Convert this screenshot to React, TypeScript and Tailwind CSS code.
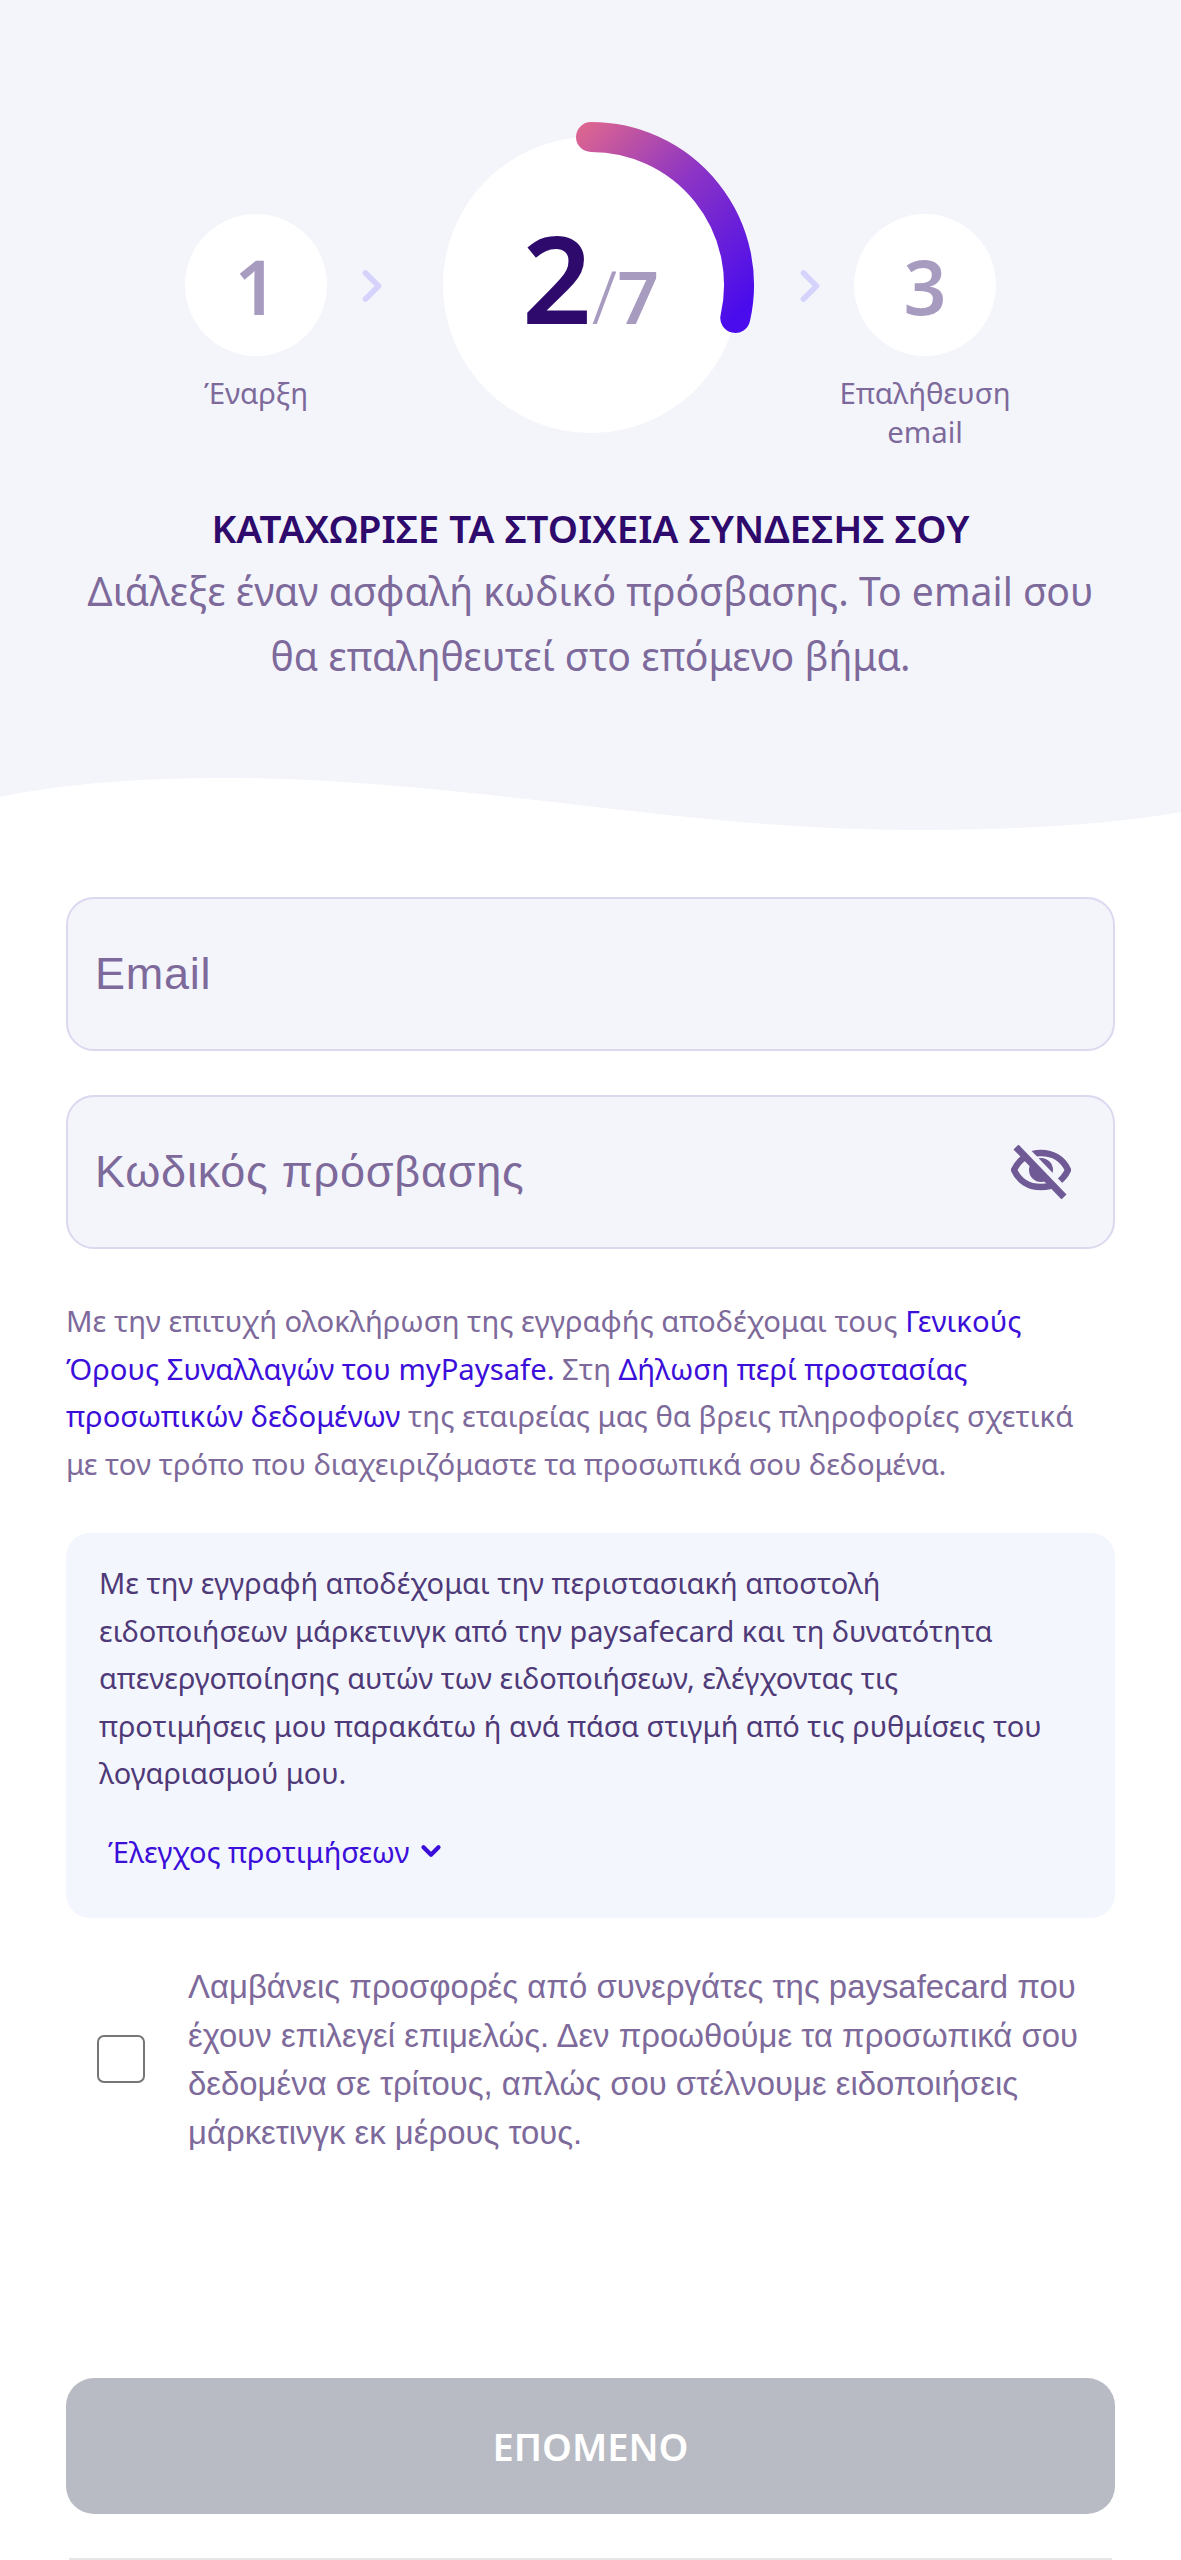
import React from 'react';
import { ChevronDown, ChevronRight } from 'lucide-react';

const StepBubble = ({ num, label }: { num: string; label: React.ReactNode }) => (
  <div className="mt-[77px] flex w-[142px] flex-col items-center">
    <div className="flex h-[142px] w-[142px] items-center justify-center rounded-full bg-white pt-[2px] text-[75px] font-semibold leading-none text-[#a89bc0]">
      {num}
    </div>
    <div className="mt-[18px] w-[190px] shrink-0 text-center text-[29.4px] leading-[39px] text-[#7d6a9b]">{label}</div>
  </div>
);

const Chevron = ({ className }: { className: string }) => (
  <ChevronRight className={className} size={52} strokeWidth={2.6} color="#d5d2fb" />
);

const ProgressArc = () => (
  <svg className="absolute left-[-20px] top-[-20px]" width="336" height="336" viewBox="0 0 336 336" fill="none">
    <defs>
      <linearGradient id="arc" x1="150" y1="20" x2="320" y2="190" gradientUnits="userSpaceOnUse">
        <stop offset="0" stopColor="#dc6590" />
        <stop offset="0.45" stopColor="#8d35c4" />
        <stop offset="1" stopColor="#4a0cec" />
      </linearGradient>
    </defs>
    <path d="M168 20 A148 148 0 0 1 312.3 201" stroke="url(#arc)" strokeWidth="30" strokeLinecap="round" />
  </svg>
);

const EyeOff = () => (
  <svg width="60" height="54" viewBox="0 0 60 54" fill="none">
    <path d="M3 25 C8 14 18 8 30 8 C42 8 52 14 57 25 C52 36 42 42 30 42 C18 42 8 36 3 25 Z" stroke="#6f5a96" strokeWidth="6.5" />
    <circle cx="30" cy="25" r="12" fill="#6f5a96" />
    <path d="M11 1 L59 51" stroke="#f4f5fb" strokeWidth="7" />
    <path d="M5 2 L53 52" stroke="#6f5a96" strokeWidth="7" />
  </svg>
);

export default function App() {
  return (
    <div className="h-[2560px] w-[1181px] overflow-hidden bg-white font-['Noto_Sans',sans-serif]">
      {/* Top stepper block */}
      <section className="h-[778px] bg-[#f4f5fb] pt-[137px]">
        <div className="flex h-[361.5px] items-start justify-center">
          <StepBubble num="1" label="Έναρξη" />
          <Chevron className="ml-[18.5px] mr-[45px] mt-[123px] shrink-0" />
          <div className="relative flex h-[296px] w-[296px] shrink-0 items-baseline justify-center rounded-full bg-white pt-[79px] leading-none">
            <span className="text-[122px] font-semibold text-[#2d0a6b]">2</span>
            <span className="text-[73px] font-semibold text-[#a89bc0]">
              <span className="font-light">/</span>7
            </span>
            <ProgressArc />
          </div>
          <Chevron className="ml-[45px] mr-[18.5px] mt-[123px] shrink-0" />
          <StepBubble num="3" label={<>Επαλήθευση<br />email</>} />
        </div>
        <h1 className="text-center text-[38.5px] font-semibold leading-[59.5px] text-[#2d0a6b]">
          ΚΑΤΑΧΩΡΙΣΕ ΤΑ ΣΤΟΙΧΕΙΑ ΣΥΝΔΕΣΗΣ ΣΟΥ
        </h1>
        <p className="text-center text-[39.2px] leading-[65px] text-[#7d6a9b]">
          Διάλεξε έναν ασφαλή κωδικό πρόσβασης. Το email σου
          <br />
          θα επαληθευτεί στο επόμενο βήμα.
        </p>
      </section>

      {/* Wave edge */}
      <svg className="block" width="1181" height="54" viewBox="0 0 1181 54" fill="none">
        <path d="M0 19 C70 4 150 0 226 0 C460 0 680 52 910 52 C1010 52 1100 48 1181 34 V0 H0 Z" fill="#f4f5fb" />
      </svg>

      <div className="px-[66px] pt-[65px]">
        <div className="flex flex-col gap-[44px]">
          <input
            placeholder="Email"
            className="h-[154px] w-full rounded-[28px] border-2 border-[#dcd8f0] bg-[#f4f5fb] px-[27px] font-['Liberation_Sans',sans-serif] text-[45px] tracking-[0.75px] placeholder:text-[#7d6a9b]"
          />
          <div className="flex h-[154px] items-center rounded-[28px] border-2 border-[#dcd8f0] bg-[#f4f5fb] pl-[27px] pr-[42px]">
            <input
              placeholder="Κωδικός πρόσβασης"
              className="min-w-0 flex-1 bg-transparent font-['Liberation_Sans',sans-serif] text-[45px] tracking-[0.75px] placeholder:text-[#7d6a9b]"
            />
            <EyeOff />
          </div>
        </div>

        <p className="mt-[49px] max-w-[1030px] text-[29.25px] leading-[47.5px] text-[#7d6a9b]">
          Με την επιτυχή ολοκλήρωση της εγγραφής αποδέχομαι τους <a className="text-[#3b0fd9]">Γενικούς Όρους Συναλλαγών του myPaysafe.</a> Στη <a className="text-[#3b0fd9]">Δήλωση περί προστασίας προσωπικών δεδομένων</a> της εταιρείας μας θα βρεις πληροφορίες σχετικά με τον τρόπο που διαχειριζόμαστε τα προσωπικά σου δεδομένα.
        </p>

        <div className="mt-[45px] h-[385px] rounded-[24px] bg-[#f4f6fe] px-[33px] pt-[26px]">
          <p className="max-w-[955px] text-[29px] leading-[47.5px] text-[#4f3a78]">
            Με την εγγραφή αποδέχομαι την περιστασιακή αποστολή ειδοποιήσεων μάρκετινγκ από την paysafecard και τη δυνατότητα απενεργοποίησης αυτών των ειδοποιήσεων, ελέγχοντας τις προτιμήσεις μου παρακάτω ή ανά πάσα στιγμή από τις ρυθμίσεις του λογαριασμού μου.
          </p>
          <div className="mt-[31px] flex items-center gap-[7px] pl-[9px] text-[29px] leading-[47.5px] text-[#3b0fd9]">
            Έλεγχος προτιμήσεων
            <ChevronDown size={30} strokeWidth={3.4} />
          </div>
        </div>

        <div className="mt-[45px] flex items-center">
          <input
            type="checkbox"
            className="mb-[3px] ml-[31px] h-[48px] w-[48px] shrink-0 appearance-none rounded-[7px] border-2 border-[#767676] bg-white"
          />
          <p className="ml-[43px] font-['Liberation_Sans',sans-serif] text-[32.9px] leading-[48.6px] text-[#7d6a9b]">
            Λαμβάνεις προσφορές από συνεργάτες της paysafecard που έχουν επιλεγεί επιμελώς. Δεν προωθούμε τα προσωπικά σου δεδομένα σε τρίτους, απλώς σου στέλνουμε ειδοποιήσεις μάρκετινγκ εκ μέρους τους.
          </p>
        </div>

        <button className="mt-[221px] flex h-[136px] w-full items-center justify-center rounded-[28px] bg-[#b8bbc3] text-[38px] font-semibold text-white">
          ΕΠΟΜΕΝΟ
        </button>
        <div className="mx-[3px] mt-[44px] h-[2px] bg-[#e5e5e5]" />
      </div>
    </div>
  );
}
